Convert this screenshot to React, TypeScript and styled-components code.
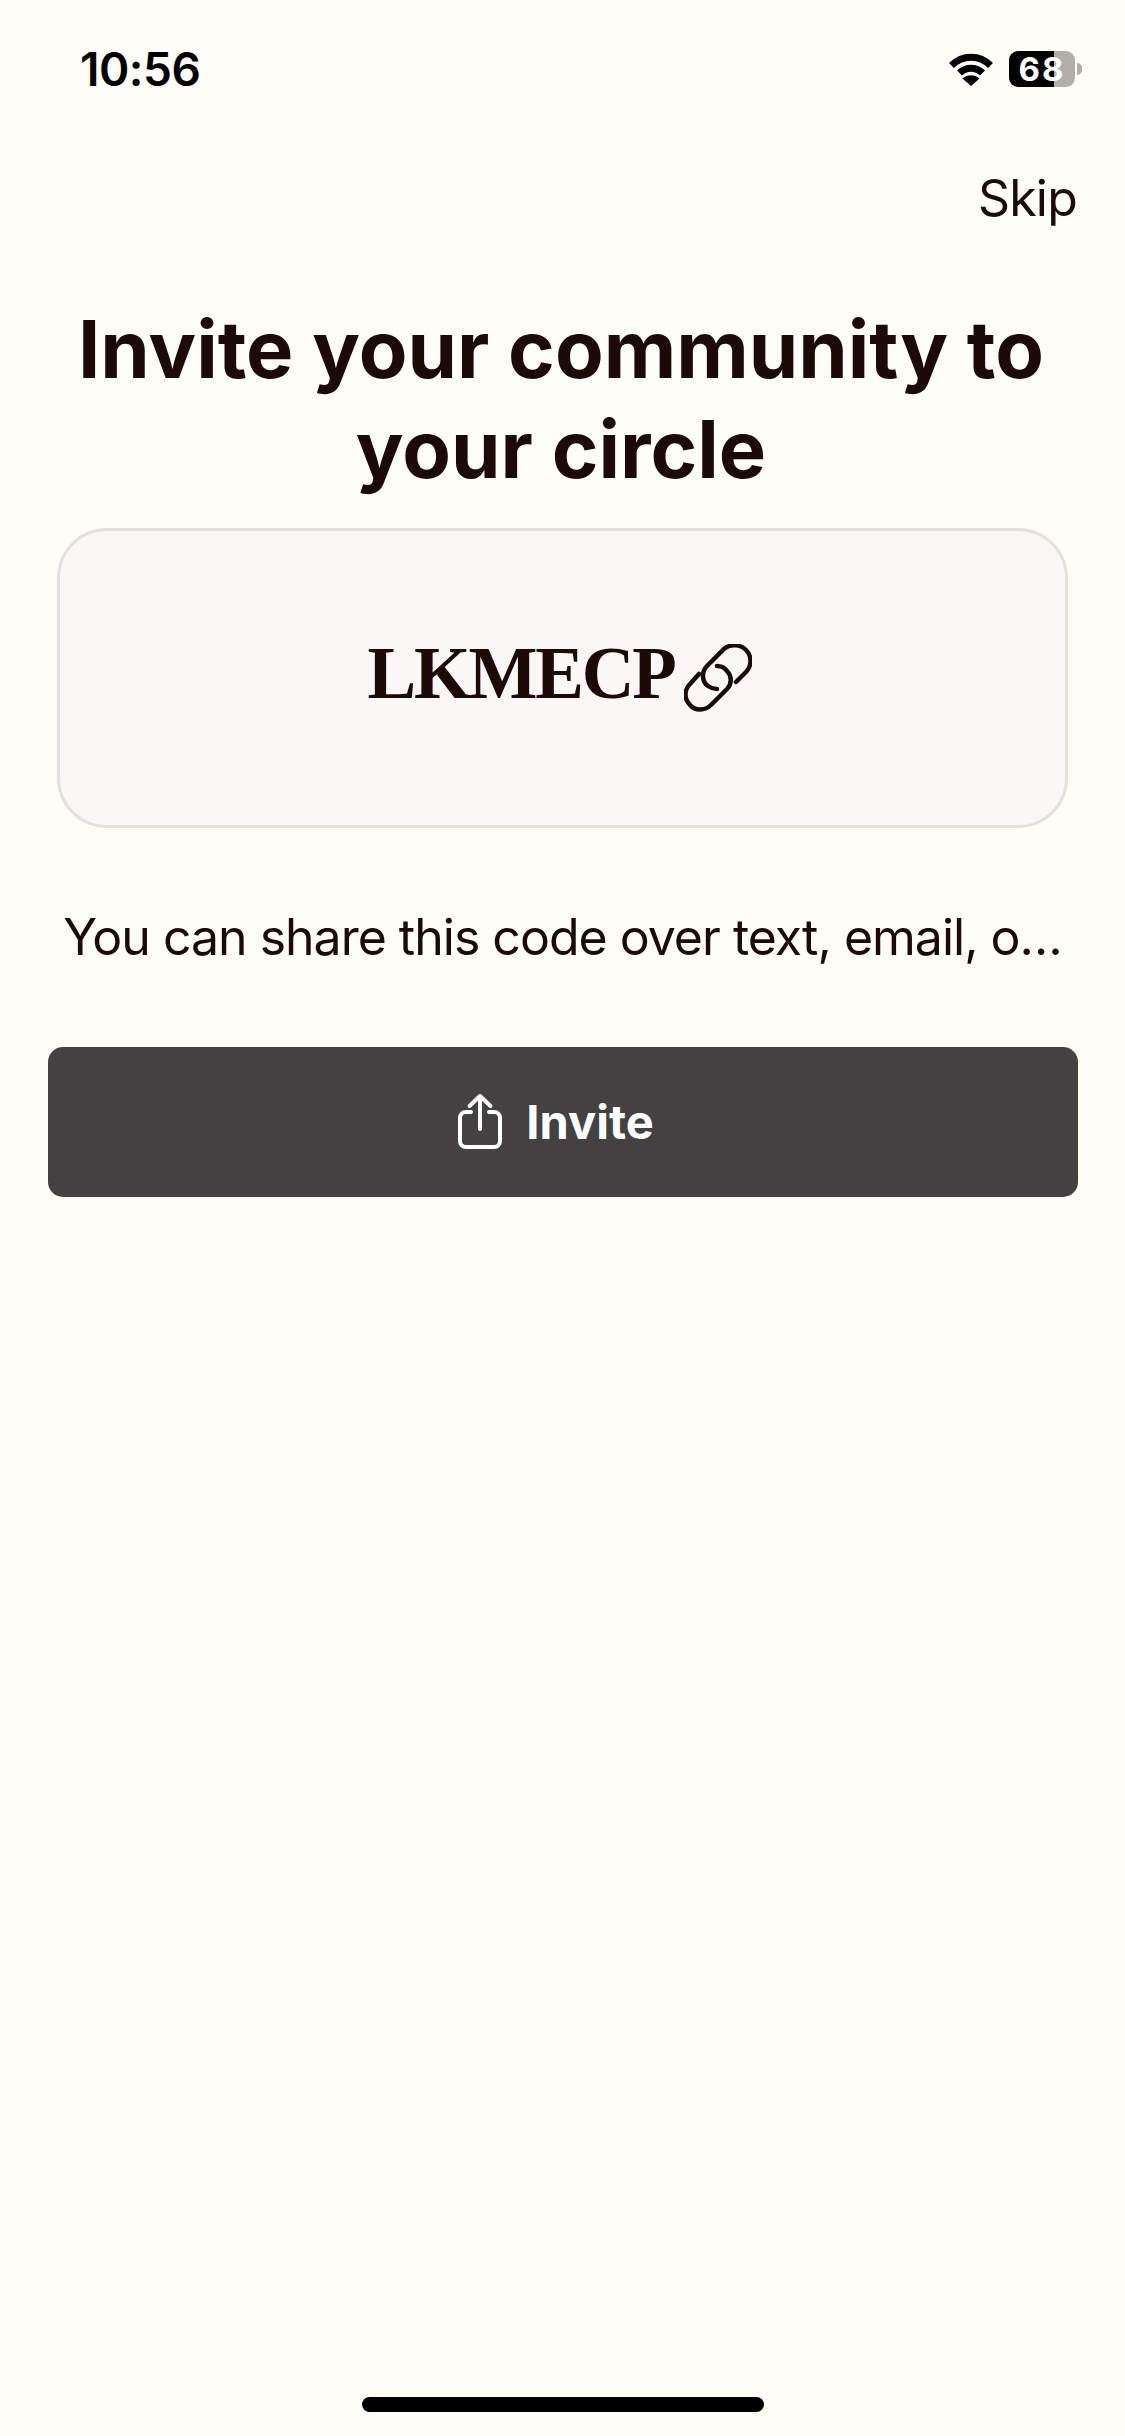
import React from "react";
import styled, { createGlobalStyle } from "styled-components";

const Global = createGlobalStyle`
  html, body { margin: 0; padding: 0; background: #fffdf7; }
  * { box-sizing: border-box; }
`;

const Page = styled.div`
  width: 1125px;
  height: 2436px;
  background: #fffdf7;
  display: flex;
  flex-direction: column;
  font-family: Inter, "Liberation Sans", sans-serif;
  color: #1c0a08;
`;

const StatusBar = styled.div`
  height: 136px;
  padding: 46px 43px 0 80px;
  display: flex;
  justify-content: space-between;
  align-items: flex-start;
`;

const Time = styled.div`
  font-family: Inter, "Liberation Sans", sans-serif;
  font-size: 46px;
  font-weight: 600;
  letter-spacing: -0.5px;
  line-height: 46px;
  color: #000;
`;

const StatusIcons = styled.div`
  display: flex;
  align-items: center;
  gap: 15px;
  margin-top: 5px;
`;

const Battery = styled.div`
  position: relative;
  width: 66px;
  height: 36px;
  margin-right: 7px;
  border-radius: 9px;
  background: linear-gradient(90deg, #000 0 68%, #b0afaa 68% 100%);
  color: #fff;
  font-size: 33px;
  font-weight: 700;
  letter-spacing: 2px;
  line-height: 36px;
  text-align: center;
`;

const BatteryCap = styled.span`
  position: absolute;
  right: -7px;
  top: 12px;
  width: 5px;
  height: 12px;
  border-radius: 0 6px 6px 0;
  background: #b0afaa;
`;

const SkipRow = styled.div`
  display: flex;
  justify-content: flex-end;
  padding: 32px 48px 0 0;
`;

const Skip = styled.span`
  font-size: 50px;
  font-weight: 400;
  letter-spacing: -0.8px;
  line-height: 60px;
`;

const Title = styled.h1`
  margin: 71px 0 0;
  padding-right: 3px;
  font-size: 79.500px;
  font-weight: 700;
  line-height: 100px;
  text-align: center;
`;

const CodeCard = styled.div`
  margin: 29px 57px 0;
  height: 300px;
  padding-right: 6px;
  border: 3px solid #e2e1de;
  border-radius: 50px;
  background: #f9f8f7;
  display: flex;
  align-items: center;
  justify-content: center;
  gap: 9px;
`;

const Code = styled.span`
  padding-bottom: 8px;
  font-family: "Liberation Serif", serif;
  font-size: 73px;
  font-weight: 700;
  letter-spacing: -2.200px;
  line-height: 80px;
`;

const Hint = styled.p`
  margin: 78px 0 0;
  font-size: 50px;
  letter-spacing: -1px;
  line-height: 62px;
  white-space: nowrap;
  text-align: center;
`;

const InviteButton = styled.button`
  margin: 79px 47px 0 48px;
  height: 150px;
  padding: 0 14px 2px 0;
  border: none;
  border-radius: 15px;
  background: #434142;
  color: #fff;
  display: flex;
  align-items: center;
  justify-content: center;
  gap: 24px;
  font-family: Inter, "Liberation Sans", sans-serif;
  font-size: 47px;
  font-weight: 700;
`;

const Spacer = styled.div`
  flex: 1;
`;

const HomeIndicator = styled.div`
  align-self: center;
  width: 402px;
  height: 15px;
  margin-bottom: 24px;
  border-radius: 8px;
  background: #000;
`;

export default function App() {
  return (
    <Page>
      <Global />
      <StatusBar>
        <Time>10:56</Time>
        <StatusIcons>
          <svg width="46" height="34" viewBox="0 0 46 34" aria-hidden="true">
            <g fill="none" stroke="#000" strokeWidth="7">
              <path d="M3.500 13.500C14.500 2.500 31.500 2.500 42.500 13.500" />
              <path d="M11.500 21C18 14.500 28 14.500 34.500 21" />
            </g>
            <path d="M14.500 26.500C19.500 22 26.500 22 31.500 26.500L23 34Z" fill="#000" />
          </svg>
          <Battery>
            68
            <BatteryCap />
          </Battery>
        </StatusIcons>
      </StatusBar>
      <SkipRow>
        <Skip>Skip</Skip>
      </SkipRow>
      <Title>
        Invite your community to
        <br />
        your circle
      </Title>
      <CodeCard>
        <Code>LKMECP</Code>
        <svg width="68" height="68" viewBox="0 0 68 68" fill="none" stroke="#1c0a08" strokeWidth="4.500" strokeLinecap="round" aria-hidden="true">
          <path d="M52 38L62 28C68 22 68 12 62 6C56 0 46 0 40 5L23 22C17 28 18 38 24 42C27 44 30 45 33 45" />
          <path d="M33 22C37 22 41 24 43 27C48 32 48 40 43 45L27 61C21 67 11 67 6 61C0 55 0 46 6 40L15 30" />
        </svg>
      </CodeCard>
      <Hint>You can share this code over text, email, o…</Hint>
      <InviteButton>
        <svg width="44" height="56" viewBox="0 0 44 56" fill="none" stroke="#fff" strokeWidth="4" strokeLinecap="round" strokeLinejoin="round" aria-hidden="true">
          <path d="M13 19H8C4.500 19 2 21.500 2 25V48C2 51.500 4.500 54 8 54H36C39.500 54 42 51.500 42 48V25C42 21.500 39.500 19 36 19H31" />
          <path d="M22 36V3M11.500 13L22 3L32.500 13" />
        </svg>
        Invite
      </InviteButton>
      <Spacer />
      <HomeIndicator />
    </Page>
  );
}
